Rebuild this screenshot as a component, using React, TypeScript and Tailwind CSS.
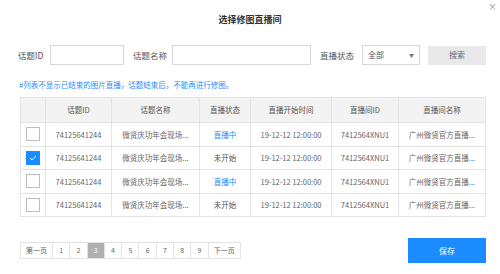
import React from "react";

const rows = [
  { checked: false, live: true },
  { checked: true, live: false },
  { checked: false, live: true },
  { checked: false, live: false },
];

const pages = ["1", "2", "3", "4", "5", "6", "7", "8", "9"];

export default function App() {
  return (
    <div
      className="relative w-[500px] h-[274px] bg-white text-[#555] overflow-hidden"
      style={{ fontFamily: '"Noto Sans CJK SC", "Noto Sans", sans-serif' }}
    >
      {/* 关闭按钮 */}
      <button className="absolute right-[3px] top-[2px] text-[9px] leading-none text-[#888]">×</button>

      {/* 标题 */}
      <h1 className="pt-[13px] text-center text-[9px] leading-[14px] font-bold text-[#333]">选择修图直播间</h1>

      <div className="pl-[18px] pr-[14px]">
        {/* 搜索条件 */}
        <div className="mt-[18px] flex items-center h-[20px] text-[8.5px]">
          <span className="w-[32px]">话题ID</span>
          <input className="w-[74px] h-[20px] border border-[#d9d9d9] outline-none" />
          <span className="ml-[9px] w-[39px]">话题名称</span>
          <input className="w-[139px] h-[20px] border border-[#d9d9d9] outline-none" />
          <span className="ml-[9px] w-[42px]">直播状态</span>
          <div className="w-[58px] h-[20px] border border-[#d9d9d9] flex items-center justify-between pl-[5px] pr-[5px] text-[8px]">
            <span>全部</span>
            <span className="text-[5px] text-[#777]">▼</span>
          </div>
          <button className="ml-[8px] w-[58px] h-[19px] bg-[#e9e9e9] text-[8px] text-[#666]">搜索</button>
        </div>

        {/* 提示 */}
        <p className="mt-[15px] pl-[1px] text-[7.5px] leading-[10px] text-[#2b8cff]">
          #列表不显示已结束的图片直播，话题结束后，不能再进行修图。
        </p>

        {/* 列表 */}
        <table className="mt-[7px] ml-[2px] w-[465px] table-fixed border-collapse text-[7.5px] text-center">
          <colgroup>
            <col className="w-[25px]" />
            <col className="w-[66px]" />
            <col className="w-[88px]" />
            <col className="w-[51px]" />
            <col className="w-[81px]" />
            <col className="w-[67px]" />
            <col className="w-[87px]" />
          </colgroup>
          <thead>
            <tr className="h-[25px] bg-[#f3f3f3] text-[#555]">
              <th className="border border-[#e3e3e3] font-normal"></th>
              <th className="border border-[#e3e3e3] font-normal">话题ID</th>
              <th className="border border-[#e3e3e3] font-normal">话题名称</th>
              <th className="border border-[#e3e3e3] font-normal">直播状态</th>
              <th className="border border-[#e3e3e3] font-normal">直播开始时间</th>
              <th className="border border-[#e3e3e3] font-normal">直播间ID</th>
              <th className="border border-[#e3e3e3] font-normal">直播间名称</th>
            </tr>
          </thead>
          <tbody>
            {rows.map((r, i) => (
              <tr key={i} className="h-[23.5px] text-[#666]">
                <td className="border border-[#e3e3e3]">
                  {r.checked ? (
                    <span className="mx-auto flex w-[14px] h-[14px] items-center justify-center bg-[#1a8cff]">
                      <svg width="8" height="6" viewBox="0 0 8 6" fill="none">
                        <path d="M1 3l2 2 4-4" stroke="white" strokeWidth="1" />
                      </svg>
                    </span>
                  ) : (
                    <span className="mx-auto block w-[14px] h-[14px] border border-[#bdbdbd] bg-white" />
                  )}
                </td>
                <td className="border border-[#e3e3e3]">74125641244</td>
                <td className="border border-[#e3e3e3]">微贤庆功年会现场...</td>
                <td className={`border border-[#e3e3e3] ${r.live ? "text-[#1a8cff]" : "text-[#555]"}`}>
                  {r.live ? "直播中" : "未开始"}
                </td>
                <td className="border border-[#e3e3e3]">19-12-12 12:00:00</td>
                <td className="border border-[#e3e3e3]">7412564XNU1</td>
                <td className="border border-[#e3e3e3]">广州微贤官方直播...</td>
              </tr>
            ))}
          </tbody>
        </table>

        {/* 分页 + 保存 */}
        <div className="mt-[21px] ml-[2px] flex items-center justify-between">
          <div className="flex h-[17px] border border-[#e3e3e3] text-[7px] text-[#666]">
            <span className="w-[32px] flex items-center justify-center border-r border-[#e3e3e3]">第一页</span>
            {pages.map((p) => (
              <span
                key={p}
                className={`w-[17.3px] flex items-center justify-center border-r border-[#e3e3e3] ${
                  p === "3" ? "bg-[#b0b0b0] text-white" : ""
                }`}
              >
                {p}
              </span>
            ))}
            <span className="w-[31px] flex items-center justify-center">下一页</span>
          </div>
          <button className="w-[78px] h-[25px] -mt-[0px] bg-[#1a8cff] text-white text-[8px]">保存</button>
        </div>
      </div>
    </div>
  );
}
